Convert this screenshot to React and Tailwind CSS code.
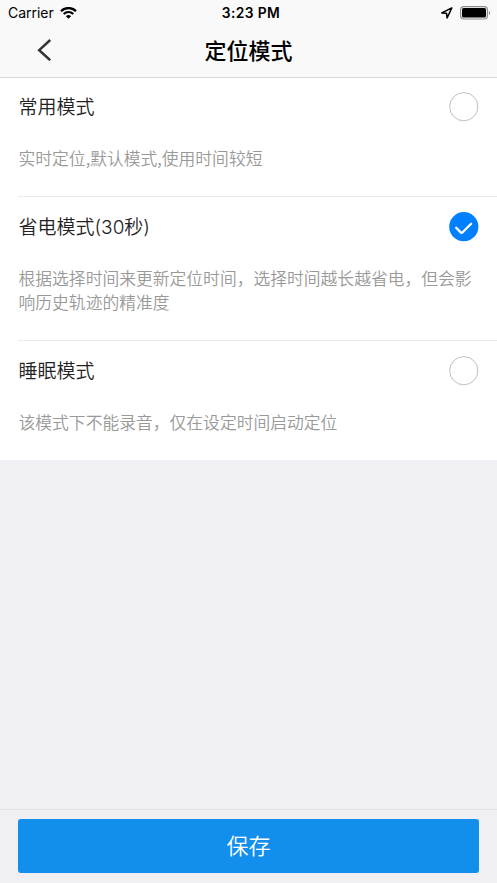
import { useState } from "react";

const MODES = [
  {
    id: "normal",
    title: "常用模式",
    desc: "实时定位,默认模式,使用时间较短",
    height: "h-[118px]",
  },
  {
    id: "saving",
    title: "省电模式(30秒)",
    desc: "根据选择时间来更新定位时间，选择时间越长越省电，但会影响历史轨迹的精准度",
    height: "h-[144px]",
  },
  {
    id: "sleep",
    title: "睡眠模式",
    desc: "该模式下不能录音，仅在设定时间启动定位",
    height: "h-[120px]",
  },
];

const StatusBar = () => (
  <div className="grid h-6 grid-cols-3 items-center pl-2 pr-[6px] pt-[2px] font-['Inter','Liberation_Sans',sans-serif] text-black">
    <div className="flex items-center gap-[6px]">
      <span className="text-[14px] leading-4 tracking-[-0.03px]">Carrier</span>
      <svg width="17" height="13" viewBox="0 0 17 13" fill="none" stroke="currentColor">
        <path d="M1 4.1a10.7 10.7 0 0 1 15 0" strokeWidth="2.3" />
        <path d="M3.7 6.9a6.9 6.9 0 0 1 9.6 0" strokeWidth="2.1" />
        <path d="M8.5 11.8 5.9 9.2a3.8 3.8 0 0 1 5.2 0z" fill="currentColor" stroke="none" />
      </svg>
    </div>
    <span className="pl-[3px] text-center text-[13.8px] font-semibold leading-4 tracking-[0.4px]">
      3:23 PM
    </span>
    <div className="flex items-center justify-end gap-[7px]">
      <svg width="12" height="12" viewBox="0 0 12 12" fill="none">
        <path
          d="M10.8 .9.8 5.9l4.7.3.6 4.8z"
          stroke="currentColor"
          strokeWidth="1.5"
          strokeLinejoin="round"
        />
      </svg>
      <svg width="31" height="14" viewBox="0 0 31 14">
        <rect x="0.6" y="0.6" width="26.8" height="12.4" rx="3.2" fill="none" stroke="#8c8c8c" strokeWidth="1.2" />
        <rect x="2" y="2.1" width="24" height="9.4" rx="1.6" fill="#000" />
        <path d="M28.9 4.7c1.7.7 1.7 3.7 0 4.4z" fill="#8c8c8c" />
      </svg>
    </div>
  </div>
);

const Radio = ({ checked }) =>
  checked ? (
    <svg className="size-[30px]" viewBox="0 0 30 30" fill="none">
      <circle cx="14.8" cy="14.7" r="14.6" fill="#007fff" />
      <path
        d="m7.2 15.8 4.5 4.6q.9.8 1.9-.1l8.5-8.5"
        stroke="#fff"
        strokeWidth="2.3"
        strokeLinecap="round"
        strokeLinejoin="round"
      />
    </svg>
  ) : (
    <svg className="size-[30px]" viewBox="0 0 30 30" fill="none">
      <circle cx="14.8" cy="14.7" r="14.1" stroke="#bfbfbf" />
    </svg>
  );

const App = () => {
  const [selected, setSelected] = useState("saving");

  return (
    <div className="flex h-[883px] w-[497px] flex-col bg-[#efeff4] font-['Noto_Sans_CJK_SC',sans-serif]">
      <header className="h-[78px] border-b border-[#d9d9d9] bg-[#f9f9f9]">
        <StatusBar />
        <div className="grid h-[52px] grid-cols-[60px_1fr_60px] items-center">
          <button className="flex justify-end pr-[8px]" aria-label="返回">
            <svg width="16" height="22" viewBox="0 0 16 22" fill="none">
              <path d="M14.2 1 3.2 11.2 14.2 21.2" stroke="#333" strokeWidth="2.5" />
            </svg>
          </button>
          <h1 className="pb-[3px] text-center text-[22px] font-medium leading-8 text-black">
            定位模式
          </h1>
        </div>
      </header>

      <main className="bg-white">
        {MODES.map((mode, index) => (
          <section key={mode.id} className={mode.height}>
            <div
              className={
                index > 0
                  ? "ml-[18px] h-full border-t border-[#ebebeb] pt-px"
                  : "ml-[18px] h-full"
              }
            >
              <button
                className="flex h-[58px] w-full items-center justify-between pr-[18px]"
                onClick={() => setSelected(mode.id)}
              >
                <span className="pl-[0.5px] pt-[2px] font-['Inter','Noto_Sans_CJK_SC',sans-serif] text-[19px] font-[350] leading-7 text-[#222]">
                  {mode.title}
                </span>
                <Radio checked={selected === mode.id} />
              </button>
              <p className="pl-[0.5px] pr-[17px] pt-[11px] text-[16.8px] font-[350] leading-[23.5px] text-[#999]">
                {mode.desc}
              </p>
            </div>
          </section>
        ))}
      </main>

      <footer className="mt-auto border-t border-[#e4e4e8] px-[18px] pb-[10px] pt-[9px]">
        <button className="h-[54px] w-full rounded-[3px] bg-[#128eec] pb-[4px] text-[22px] font-[350] leading-8 text-white">
          保存
        </button>
      </footer>
    </div>
  );
};

export default App;
